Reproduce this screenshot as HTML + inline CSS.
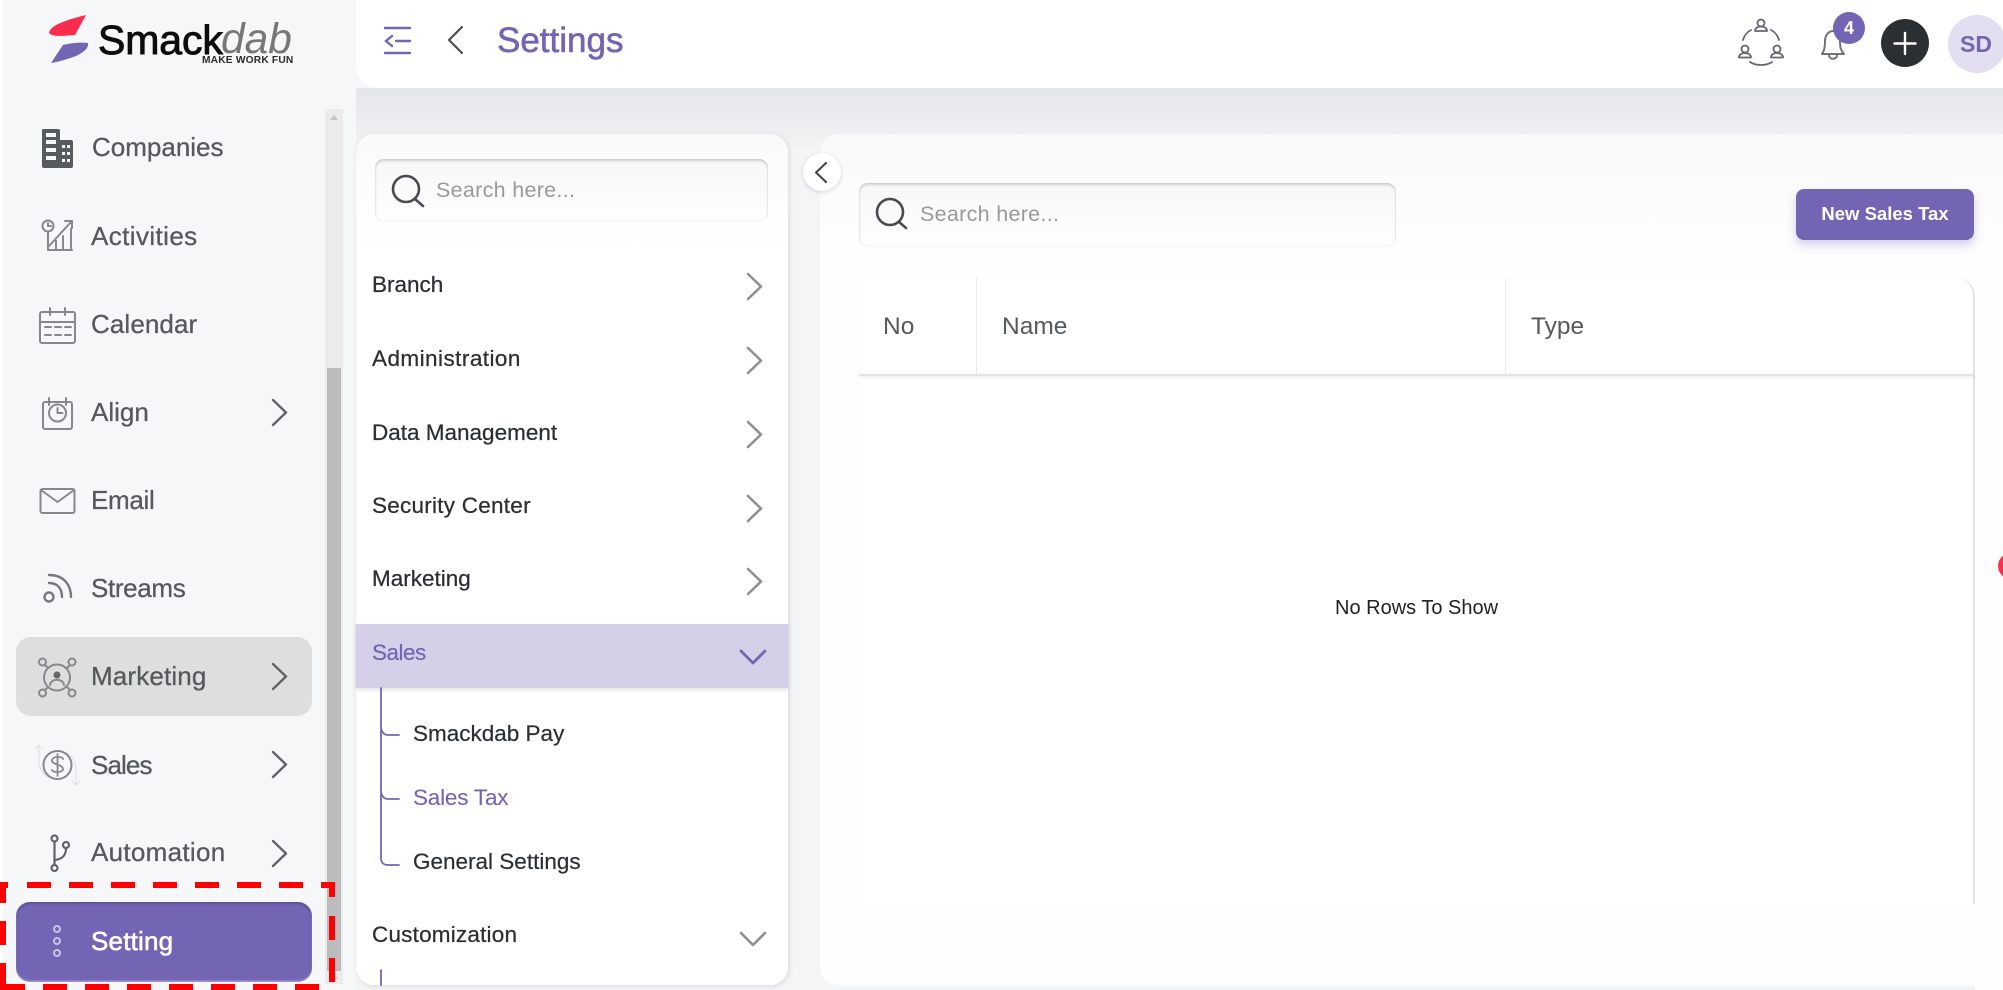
<!DOCTYPE html>
<html lang="en"><head><meta charset="utf-8"><title>Settings</title>
<style>
html,body{margin:0;padding:0;width:2003px;height:990px;overflow:hidden;background:#f6f7f9;font-family:"Liberation Sans",sans-serif}
.a{position:absolute}
.t{position:absolute;white-space:nowrap;height:40px;line-height:40px}
.nav{font-size:26px;color:#555a5e;left:91px;-webkit-text-stroke:.3px #555a5e}
.it{font-size:22.5px;color:#2b2f33;left:372px;-webkit-text-stroke:.25px #2b2f33}
.sub{font-size:22.5px;color:#2b2f33;left:413px;-webkit-text-stroke:.2px #2b2f33}
.hd{font-size:24.5px;color:#555a5e}
.ph{font-size:21.5px;color:#9a9a9a;letter-spacing:.3px}
.sb{border-radius:9px;background:linear-gradient(#f7f7f7,#fefefe);box-shadow:inset 0 2px 2px rgba(120,115,105,.28),inset 0 0 2px rgba(0,0,0,.1)}
svg{position:absolute;left:0;top:0}
</style></head><body>
<div class="a" style="left:0;top:0;width:3px;height:990px;background:#fff"></div>
<div class="a" style="left:356px;top:88px;width:1647px;height:60px;background:linear-gradient(#e5e6e9,#f2f3f5)"></div>
<div class="a" style="left:356px;top:148px;width:1647px;height:842px;background:#f4f5f7"></div>
<div class="a" style="left:1975px;top:148px;width:28px;height:842px;background:#fefefe"></div>
<div class="a" style="left:356px;top:0;width:1647px;height:88px;background:#fff;border-bottom-left-radius:22px"></div>
<div class="a" style="left:325px;top:109px;width:18px;height:875px;background:#ebebeb"></div>
<div class="a" style="left:327px;top:368px;width:14px;height:603px;background:#bcbcbc"></div>
<div class="a" style="left:16px;top:637px;width:296px;height:79px;background:#dedede;border-radius:15px"></div>
<div class="a" style="left:16px;top:902px;width:296px;height:80px;background:#7464b4;border-radius:14px;box-shadow:inset 0 1px 3px rgba(40,30,90,.55),inset 0 -1px 2px rgba(220,210,255,.8)"></div>
<div class="a" style="left:356px;top:134px;width:432px;height:851px;background:linear-gradient(#fafafa,#fff 120px);border-radius:18px;box-shadow:1px 1px 6px rgba(0,0,0,.12)"></div>
<div class="a" style="left:820px;top:134px;width:1183px;height:851px;background:linear-gradient(#f9f9f9,#fefefe 120px);border-radius:18px 0 0 18px"></div>
<div class="a sb" style="left:375px;top:159px;width:393px;height:63px"></div>
<div class="a" style="left:356px;top:624px;width:432px;height:64px;background:#d5d0e7;box-shadow:0 2px 4px rgba(0,0,0,.12)"></div>
<div class="a sb" style="left:859px;top:183px;width:537px;height:64px"></div>
<div class="a" style="left:859px;top:278px;width:1116px;height:626px;background:#fff;border-radius:18px 18px 0 0;border-right:2px solid #e2e2e2;box-sizing:border-box"></div>
<div class="a" style="left:859px;top:374px;width:1116px;height:2px;background:#e4e4e4;box-shadow:0 1px 3px rgba(0,0,0,.1)"></div>
<div class="a" style="left:976px;top:278px;width:1px;height:96px;background:#ececec"></div>
<div class="a" style="left:1505px;top:278px;width:1px;height:96px;background:#ececec"></div>
<div class="a" style="left:1796px;top:189px;width:178px;height:51px;background:#7464b4;border-radius:8px;box-shadow:0 5px 10px rgba(116,100,180,.3)"></div>
<div class="a" style="left:803px;top:153px;width:38px;height:38px;border-radius:50%;background:#fff;box-shadow:0 1px 4px rgba(0,0,0,.16)"></div>
<div class="a" style="left:1998px;top:553px;width:26px;height:26px;border-radius:50%;background:#ff2d4f"></div>
<div class="a" style="left:1881px;top:19px;width:48px;height:48px;border-radius:50%;background:#2b2f33"></div>
<div class="a" style="left:1948px;top:15px;width:58px;height:58px;border-radius:50%;background:#e3dff0"></div>

<svg width="2003" height="990" viewBox="0 0 2003 990" fill="none">
<path d="M49 33C50 27 58 22 86 15L75 35C62 36 52 37 49 33Z" fill="#fb2c4d"/>
<path d="M51 63L63 45C70 43 82 42 88 43C89 48 84 52 76 56C68 59 58 62 51 63Z" fill="#7464b4"/>
<path d="M334 115l4 5h-8zM334 982l4-5h-8z" fill="#c6c6c6"/>
<path fill="#565b5f" d="M43 129h15q2 0 2 2v9h11q2 0 2 2v24q0 2-2 2H44q-2 0-2-2V131q0-2 1-2Z"/>
<g fill="#f6f7f9"><rect x="46" y="133" width="10" height="4"/><rect x="46" y="140" width="10" height="4"/><rect x="46" y="148" width="10" height="4"/><rect x="46" y="156" width="10" height="4"/><rect x="62" y="145" width="3" height="3"/><rect x="67" y="145" width="3" height="3"/><rect x="62" y="152" width="3" height="3"/><rect x="67" y="152" width="3" height="3"/><rect x="62" y="159" width="3" height="3"/><rect x="67" y="159" width="3" height="3"/></g>
<g stroke="#85898d" stroke-width="2" stroke-linecap="round" stroke-linejoin="round">
<circle cx="48" cy="226" r="5.5"/><path d="M48 223v3h3M48 232v18h24M49 246l22-24M65 221h7v7M56 249v-8M63 249v-13M71 249v-20"/>
<rect x="40" y="312" width="35" height="31" rx="2"/><path d="M40 322h35M50 308v7M65 308v7M45 327h6M55 327h6M65 327h6M45 335h6M55 335h6M65 335h6"/>
<rect x="43" y="402" width="29" height="27" rx="2"/><path d="M49 398v7M66 398v7"/><circle cx="57.5" cy="413" r="8.5"/><path d="M57.5 408v5h5"/>
<rect x="40.5" y="489" width="34" height="24" rx="2"/><path d="M41 490l16.5 12L74 490"/>
<circle cx="57" cy="677.500" r="13"/><circle cx="42.500" cy="662" r="3.500"/><circle cx="72" cy="662" r="3.500"/><circle cx="42.500" cy="693" r="3.500"/><circle cx="72" cy="693" r="3.500"/><path d="M45 665l3 3M70 665l-3 3M45 690l3-3M70 690l-3-3M50 685c1-7 13-7 14 0"/>
<circle cx="57" cy="675" r="2.500" fill="#666" stroke="#666"/>
<circle cx="57.5" cy="765" r="14"/>
<path stroke-width="1.800" d="M63 759c-1-3-10-3-11 1-1 5 11 4 11 9 0 4-10 4-11 1M57.5 754v22"/>
</g>
<path stroke-width="1" stroke="#dcdee0" stroke-linecap="round" d="M39 758c-1 8 3 16 10 20M76 772c1-8-3-16-10-20M39 745v15M35 749l4-4 4 4M76 770v15M72 781l4 4 4-4"/>
<g stroke="#5f6468" stroke-linecap="round" stroke-linejoin="round" fill="none">
<g stroke="#75797d" stroke-width="2.400"><circle cx="49" cy="597" r="4.500"/><path d="M49 583c9 0 13 6 13 14M49 575c15 0 22 10 22 22"/></g>
<g stroke-width="2.200"><circle cx="54.5" cy="838.5" r="3"/><circle cx="66" cy="845" r="3"/><circle cx="54.5" cy="868" r="3"/><path d="M54.5 842v22M55 860c8-1 11-5 11-12"/></g>
<g stroke-width="2.400"><path d="M273 400l13 12.500L273 425M273 664l13 12.500L273 689M273 752l13 12.500L273 777M273 841l13 12.500L273 866"/></g>
</g>
<g stroke="#c9c3e6" stroke-width="2"><circle cx="57" cy="929" r="3"/><circle cx="57" cy="941" r="3"/><circle cx="57" cy="953" r="3"/></g>
<g fill="#ff0000">
<path d="M0 882h8v6H6v15H0zM27 882h24v6H27zM69 882h24v6H69zM111 882h24v6h-24zM153 882h24v6h-24zM195 882h24v6h-24zM237 882h24v6h-24zM279 882h24v6h-24zM321 882h14v15h-6v-9h-8z"/>
<path d="M0 921h6v24H0zM0 963h6v21h19v6H0zM43 984h24v6H43zM85 984h24v6H85zM127 984h24v6h-24zM169 984h24v6h-24zM211 984h24v6h-24zM253 984h24v6h-24zM295 984h24v6h-24zM329 916h6v24h-6zM329 958h6v24h-6z"/>
</g>
<g stroke="#7464b4" stroke-width="2.400" stroke-linecap="round"><path d="M385 28h25M396 41h14M385 53h25M392 36l-6 5 6 5"/></g>
<path d="M462 27l-13 13 13 13" stroke="#4b4f53" stroke-width="2.200" stroke-linecap="round" stroke-linejoin="round"/>
<g stroke="#64686c" stroke-width="1.800" stroke-linecap="round" stroke-linejoin="round">
<circle cx="1761" cy="23" r="3.500"/><path d="M1755 31c0-6 12-6 12 0z"/>
<circle cx="1745" cy="49" r="3.500"/><path d="M1739 57.500c0-6 12-6 12 0z"/>
<circle cx="1777" cy="49" r="3.500"/><path d="M1771 57.500c0-6 12-6 12 0z"/>
<path d="M1743 40c1-4 4-8 8-10M1771 30c4 2 7 6 8 10M1750 62c6 4 16 4 22 0"/>
</g>
<path d="M1822 54h22c-3-3-4-6-4-13 0-6-3-10-7-10s-8 4-8 10c0 7-1 10-3 13Z" stroke="#6f7377" stroke-width="2" stroke-linejoin="round"/>
<path d="M1829 55c0 5 8 5 8 0" stroke="#6f7377" stroke-width="2"/>
<circle cx="1849" cy="28" r="16" fill="#7464b4"/>
<path d="M1905 33v21M1894.5 43.500h21" stroke="#fff" stroke-width="2.400" stroke-linecap="round"/>
<path d="M826 163l-10 9.500 10 9.500" stroke="#44484c" stroke-width="2.200" stroke-linecap="round" stroke-linejoin="round"/>
<g stroke="#8d8f91" stroke-width="2.600" stroke-linecap="round" stroke-linejoin="round">
<path d="M748 274l13 12.500-13 12.500M748 348l13 12.500-13 12.500M748 422l13 12.500-13 12.500M748 496l13 12.500-13 12.500M748 569l13 12.500-13 12.500M741 933l12 12 12-12"/>
</g>
<path d="M741 651l12 12 12-12" stroke="#7464b4" stroke-width="2.800" stroke-linecap="round" stroke-linejoin="round"/>
<g stroke="#7464b4" stroke-width="1.800" stroke-linecap="round">
<path d="M381 688v170c0 5 3 7 7 7h11M381 717v9c0 6 3 9 7 9h11M381 781v9c0 6 3 9 7 9h11"/>
<path d="M381 970v15"/>
</g>
<g stroke="#484c50" stroke-width="2.600" stroke-linecap="round"><circle cx="406" cy="189" r="13"/><path d="M415 199l8 7"/>
<circle cx="890" cy="212" r="13"/><path d="M899 222l7 6"/></g>
</svg>

<div class="t" style="left:98px;top:20px;font-size:41px;color:#0d0d0d;-webkit-text-stroke:.9px #0d0d0d;letter-spacing:-.1px">Smack</div>
<div class="t" style="left:221px;top:20px;font-size:42.5px;color:#777;font-style:italic">dab</div>
<div class="t" style="left:202px;top:41px;font-size:10.2px;font-weight:bold;color:#2a2a2a;letter-spacing:.2px">MAKE WORK FUN</div>

<div class="t nav" style="top:127px;left:92px">Companies</div>
<div class="t nav" style="top:216px;letter-spacing:.4px">Activities</div>
<div class="t nav" style="top:304px;letter-spacing:.1px">Calendar</div>
<div class="t nav" style="top:392px">Align</div>
<div class="t nav" style="top:480px;letter-spacing:-.3px">Email</div>
<div class="t nav" style="top:568px;letter-spacing:-.35px">Streams</div>
<div class="t nav" style="top:656px;letter-spacing:.15px">Marketing</div>
<div class="t nav" style="top:745px;letter-spacing:-.9px">Sales</div>
<div class="t nav" style="top:832px;letter-spacing:.3px">Automation</div>
<div class="t nav" style="top:921px;color:#fff;-webkit-text-stroke:.6px #fff;letter-spacing:.2px">Setting</div>

<div class="t" style="left:497px;top:21px;font-size:35px;color:#7464b4;-webkit-text-stroke:.6px #7464b4">Settings</div>
<div class="t" style="left:1849px;top:8px;width:0;font-size:18px;font-weight:bold;color:#fff"><span style="display:block;width:20px;margin-left:-10px;text-align:center">4</span></div>
<div class="t" style="left:1948px;top:24px;width:56px;text-align:center;font-size:23px;font-weight:bold;color:#7464b4">SD</div>

<div class="t ph" style="left:436px;top:170px">Search here...</div>
<div class="t ph" style="left:920px;top:194px">Search here...</div>

<div class="t it" style="top:265px">Branch</div>
<div class="t it" style="top:339px;letter-spacing:.45px">Administration</div>
<div class="t it" style="top:413px">Data Management</div>
<div class="t it" style="top:486px;letter-spacing:.25px">Security Center</div>
<div class="t it" style="top:559px">Marketing</div>
<div class="t it" style="top:633px;color:#7464b4;-webkit-text-stroke:.2px #7464b4;letter-spacing:-.5px">Sales</div>
<div class="t sub" style="top:714px">Smackdab Pay</div>
<div class="t sub" style="top:778px;color:#7464b4;-webkit-text-stroke:.1px #7464b4;letter-spacing:-.2px">Sales Tax</div>
<div class="t sub" style="top:842px">General Settings</div>
<div class="t it" style="top:915px;letter-spacing:.2px">Customization</div>

<div class="t hd" style="left:883px;top:307px">No</div>
<div class="t hd" style="left:1002px;top:307px">Name</div>
<div class="t hd" style="left:1531px;top:307px">Type</div>
<div class="t" style="left:1335px;top:588px;width:160px;text-align:center;font-size:20px;color:#222">No Rows To Show</div>
<div class="t" style="left:1796px;top:194px;width:178px;text-align:center;font-size:18.5px;font-weight:bold;color:#fff">New Sales Tax</div>
</body></html>
